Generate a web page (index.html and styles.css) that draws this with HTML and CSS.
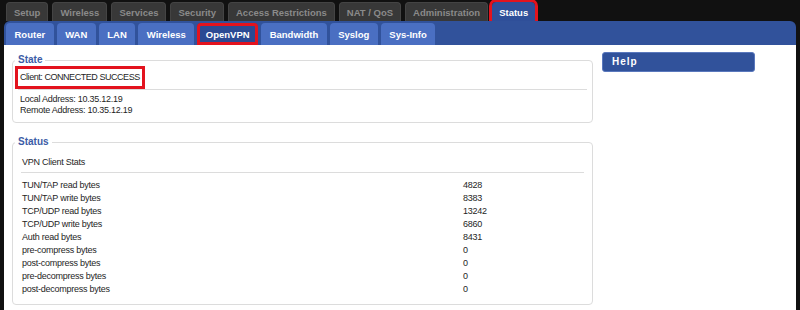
FILE: index.html
```html
<!DOCTYPE html>
<html lang="en">
<head>
    <meta charset="UTF-8">
    <meta name="viewport" content="width=device-width, initial-scale=1.0">
    <title>Status - OpenVPN</title>
    <link rel="stylesheet" href="styles.css">
</head>
<body>

    <!-- Main menu -->
    <ul class="tabs">
        <li>Setup</li>
        <li>Wireless</li>
        <li>Services</li>
        <li>Security</li>
        <li>Access Restrictions</li>
        <li>NAT / QoS</li>
        <li>Administration</li>
        <li class="current">Status</li>
    </ul>

    <div class="panel">
        <!-- Sub menu -->
        <ul class="subtabs">
            <li>Router</li>
            <li>WAN</li>
            <li>LAN</li>
            <li>Wireless</li>
            <li class="current">OpenVPN</li>
            <li>Bandwidth</li>
            <li>Syslog</li>
            <li>Sys-Info</li>
        </ul>

        <div class="content">
            <div class="main">
                <fieldset class="box state">
                    <legend>State</legend>
                    <div class="client"><span class="mark">Client: CONNECTED SUCCESS</span></div>
                    <hr>
                    <div class="addr">
                        <div>Local Address: 10.35.12.19</div>
                        <div>Remote Address: 10.35.12.19</div>
                    </div>
                </fieldset>

                <fieldset class="box stats">
                    <legend>Status</legend>
                    <div class="stats-title">VPN Client Stats</div>
                    <hr>
                    <table class="stats-table">
                        <tr><td>TUN/TAP read bytes</td><td>4828</td></tr>
                        <tr><td>TUN/TAP write bytes</td><td>8383</td></tr>
                        <tr><td>TCP/UDP read bytes</td><td>13242</td></tr>
                        <tr><td>TCP/UDP write bytes</td><td>6860</td></tr>
                        <tr><td>Auth read bytes</td><td>8431</td></tr>
                        <tr><td>pre-compress bytes</td><td>0</td></tr>
                        <tr><td>post-compress bytes</td><td>0</td></tr>
                        <tr><td>pre-decompress bytes</td><td>0</td></tr>
                        <tr><td>post-decompress bytes</td><td>0</td></tr>
                    </table>
                </fieldset>
            </div>

            <div class="sidebar">
                <div class="help-title">Help</div>
            </div>
        </div>
    </div>

</body>
</html>
```

FILE: styles.css
```css
* {
    margin: 0;
    padding: 0;
    box-sizing: border-box;
}

body {
    height: 100vh;
    display: flex;
    flex-direction: column;
    overflow: hidden;
    background: #111111;
    color: #1e1e1e;
    font-family: 'Liberation Sans', Arial, sans-serif;
    font-size: 9px;
    letter-spacing: -0.25px;
}

/* Main menu tabs */
.tabs {
    display: flex;
    gap: 4px;
    height: 21px;
    padding: 2px 0 0 6px;
    list-style: none;
}

.tabs li {
    height: 19px;
    padding: 1px 7px 0;
    line-height: 17px;
    background: #383838;
    border: 1px solid #444;
    border-bottom: none;
    border-radius: 4px 4px 0 0;
    color: #8a8a8a;
    font-size: 9.5px;
    font-weight: bold;
    letter-spacing: 0;
}

.tabs li.current {
    padding: 1px 6px 0;
    background: #2f4f99;
    border-color: #2f4f99;
    color: #fff;
    outline: 3px solid #e3131e;
}

/* Blue panel with sub menu */
.panel {
    flex: 1;
    display: flex;
    flex-direction: column;
    margin: 0 4px;
    background: #31529b;
    border-radius: 6px 6px 0 0;
}

.subtabs {
    display: flex;
    gap: 3px;
    padding: 2px 2px 0;
    list-style: none;
}

.subtabs li {
    height: 22px;
    padding: 2px 8.5px 0;
    line-height: 20px;
    background: #4a6fc2;
    border-radius: 4px 4px 0 0;
    color: #fff;
    font-size: 9.5px;
    font-weight: bold;
    letter-spacing: 0;
}

.subtabs li.current {
    background: #2b4a93;
    outline: 3px solid #e3131e;
    outline-offset: -3px;
}

/* Page content */
.content {
    flex: 1;
    display: flex;
    align-items: flex-start;
    background: #fff;
    padding: 7px 0 0 8px;
}

.main {
    width: 581px;
    padding-top: 2px;
}

.box {
    border: 1px solid #dcdcdc;
    border-radius: 4px;
    padding: 0 5px 6px;
    margin: 0;
}

.box legend {
    margin-left: -3px;
    padding: 0 3px;
    line-height: 12px;
    color: #3c5ca6;
    font-size: 10px;
    font-weight: bold;
    letter-spacing: 0;
}

.box hr {
    border: none;
    border-top: 1px solid #dcdcdc;
    margin-top: 3px;
}

.client {
    display: flex;
    padding-top: 3px;
}

.mark {
    padding: 0 2px;
    line-height: 17px;
    letter-spacing: -0.45px;
    outline: 3px solid #e3131e;
}

.addr {
    padding: 4px 0 0 2px;
    line-height: 11px;
}

.stats {
    margin-top: 13px;
    padding-bottom: 8px;
}

.stats-title {
    margin-top: 8px;
    padding-left: 4px;
    line-height: 13px;
}

.stats hr {
    margin: 3px 3px 0;
}

.stats-table {
    margin: 6px 0 0 4px;
    border-collapse: collapse;
}

.stats-table td {
    height: 13px;
    padding: 0;
    line-height: 13px;
}

.stats-table td:first-child {
    width: 441px;
}

/* Help column */
.sidebar {
    width: 153px;
    margin-left: 9px;
}

.help-title {
    height: 20px;
    padding-left: 9px;
    line-height: 18px;
    background: #31529b;
    border: 1px solid #5a78bd;
    border-radius: 3px;
    color: #fff;
    font-size: 10px;
    font-weight: bold;
    letter-spacing: 1px;
}
```
